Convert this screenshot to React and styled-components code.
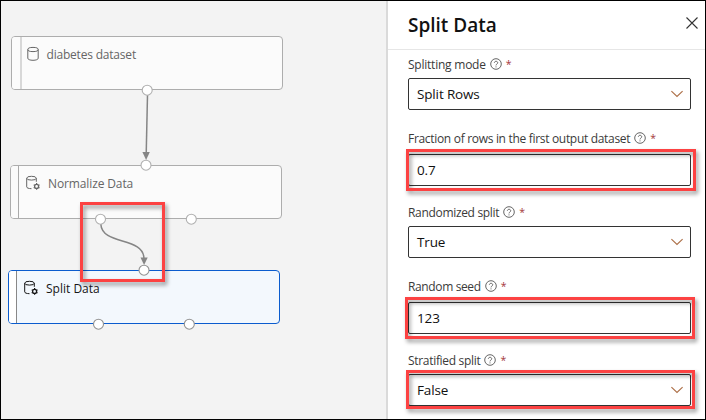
import React from "react";
import styled, { createGlobalStyle } from "styled-components";

const GlobalStyle = createGlobalStyle`
  * { box-sizing: border-box; }
  body { margin: 0; }
`;

const Frame = styled.div`
  width: 706px;
  height: 420px;
  display: flex;
  position: relative;
  overflow: hidden;
  border: 1px solid #000;
  background: #f3f3f3;
  font-family: "Open Sans", "Noto Sans", sans-serif;
  color: #111;
`;

const Canvas = styled.main`
  position: relative;
  flex: 1;
`;

const Node = styled.div`
  position: absolute;
  left: ${(p) => p.$x}px;
  top: ${(p) => p.$y}px;
  width: 272px;
  height: 54px;
  display: flex;
  overflow: hidden;
  border: 1px solid ${(p) => (p.$selected ? "#0b5cce" : "#adadad")};
  border-radius: 4px;
  background: ${(p) => (p.$selected ? "#f3f8fd" : "#fbfbfb")};
  color: ${(p) => (p.$selected ? "#161616" : "#666")};
`;

const Grip = styled.div`
  width: ${(p) => p.$width}px;
  border-right: ${(p) => p.$line};
  background: ${(p) => (p.$selected ? "#fff" : "#fbfbfb")};
`;

const NodeBody = styled.div`
  display: flex;
  align-items: flex-start;
  gap: ${(p) => p.$gap}px;
  padding: 9px 0 0 ${(p) => p.$inset}px;
`;

const NodeName = styled.span`
  font-size: 12px;
  line-height: 18px;
  white-space: nowrap;
  letter-spacing: ${(p) => p.$track}px;
`;

const Wires = styled.svg`
  position: absolute;
  left: -1px;
  top: -1px;
`;

const Panel = styled.aside`
  width: 319px;
  display: flex;
  flex-direction: column;
  border-left: 2px solid #dadada;
  background: #fff;
`;

const PanelHeader = styled.header`
  height: 49px;
  flex: none;
  display: flex;
  align-items: center;
  justify-content: space-between;
  padding: 0 7px 4px 20px;
  border-bottom: 1px solid #e6e6e6;
`;

const Title = styled.h1`
  margin: 0;
  padding-top: 4px;
  font-size: 19px;
  font-weight: 600;
  line-height: 26px;
  white-space: nowrap;
`;

const Form = styled.div`
  display: flex;
  flex-direction: column;
  padding: 0 14px 0 20px;
`;

const Field = styled.div`
  height: ${(p) => p.$height}px;
  display: flex;
  flex-direction: column;
  justify-content: flex-end;
  gap: ${(p) => p.$gap}px;
`;

const Label = styled.div`
  height: 16px;
  display: flex;
  align-items: center;
  font-size: 12px;
  line-height: 18px;
  white-space: nowrap;
  color: #3a3a3a;
`;

const LabelText = styled.span`
  letter-spacing: ${(p) => p.$track}px;
  margin-right: 4px;
  padding-top: 1px;
`;

const Required = styled.span`
  margin-left: 4px;
  font-size: 10.5px;
  color: #a4373a;
`;

const Control = styled.div`
  height: 32px;
  display: flex;
  align-items: center;
  justify-content: space-between;
  padding: 0 7px 0 8px;
  border: 1px solid #333;
  border-radius: 2px;
  background: #fff;
  font-size: 13.5px;
  line-height: 18px;
  letter-spacing: -0.15px;
`;

const Highlight = styled.div`
  position: absolute;
  left: ${(p) => p.$x - 1}px;
  top: ${(p) => p.$y - 1}px;
  width: ${(p) => p.$w}px;
  height: ${(p) => p.$h}px;
  border: 3px solid #fc4242;
  filter: drop-shadow(2px 3px 2px rgba(0, 0, 0, 0.42));
  pointer-events: none;
`;

const DatasetIcon = () => (
  <svg width="13" height="16" viewBox="0 0 13 16" fill="none" stroke="currentColor">
    <ellipse cx="6" cy="3.5" rx="5.2" ry="2.1" />
    <path d="M.8 3.5v8.8c0 1.1 2.2 2 5.2 2s5.2-.9 5.2-2V3.5" />
  </svg>
);

const ModuleIcon = () => (
  <svg width="15" height="16" viewBox="0 0 15 16" fill="none" stroke="currentColor">
    <ellipse cx="5.5" cy="3.2" rx="4.8" ry="1.9" />
    <path d="M.7 3.2v8.7c0 1 1.8 1.7 4.8 1.8M10.3 3.2v3.6" />
    <circle cx="10.6" cy="11.4" r="2" strokeWidth="1.3" />
    <path
      d="M10.6 8.1v1.1M10.6 13.6v1.1M7.7 9.7l.9.6M12.6 12.5l.9.6M7.7 13.1l.9-.6M12.6 10.3l.9-.6"
      strokeWidth="1.2"
    />
  </svg>
);

const HelpIcon = () => (
  <svg width="12" height="12" viewBox="0 0 12 12" fill="none" stroke="#555" strokeWidth=".9">
    <circle cx="6" cy="6" r="5.3" />
    <path d="M4.4 4.8c0-2 3.3-2 3.3 0C7.7 6 6 6.1 6 7.4" />
    <path d="M6 8.4v1" />
  </svg>
);

const ChevronIcon = () => (
  <svg width="12" height="8" viewBox="0 0 12 8" fill="none" stroke="#ad7048" strokeWidth="1.15">
    <path d="M.4 1.1 6 6.5l5.6-5.4" />
  </svg>
);

const CloseIcon = () => (
  <svg width="12" height="12" viewBox="0 0 12 12" fill="none" stroke="#333" strokeWidth="1.1">
    <path d="m.5.5 11 11m0-11-11 11" />
  </svg>
);

const nodes = [
  { name: "diabetes dataset", x: 10, y: 35, grip: 10, line: "2px solid #d8d8d8", inset: 5, gap: 6.5, track: -0.2, icon: DatasetIcon },
  { name: "Normalize Data", x: 9, y: 164, grip: 8, line: "1px solid #aaa", inset: 7, gap: 7, track: -0.12, icon: ModuleIcon },
  { name: "Split Data", x: 7, y: 269, grip: 8, line: "1px solid #888", inset: 7, gap: 7, track: 0, icon: ModuleIcon, selected: true },
];

const ports = [
  [147.2, 90], [146, 165], [100.5, 219], [191.3, 219],
  [144, 270, true], [98.5, 324, true], [189.3, 324, true],
];

const fields = [
  { label: "Splitting mode", value: "Split Rows", select: true, height: 60, gap: 6, track: -0.23 },
  { label: "Fraction of rows in the first output dataset", value: "0.7", height: 76, gap: 8, track: -0.31 },
  { label: "Randomized split", value: "True", select: true, height: 72, gap: 6, track: -0.32 },
  { label: "Random seed", value: "123", height: 76, gap: 8, track: -0.37 },
  { label: "Stratified split", value: "False", select: true, height: 72, gap: 6, track: -0.31 },
];

const highlights = [
  [80, 202, 85, 80],
  [406, 149, 290, 42],
  [405, 297, 290, 42],
  [406, 370, 289, 39],
];

export default function App() {
  return (
    <Frame>
      <GlobalStyle />
      <Canvas>
        {nodes.map(({ icon: Icon, ...n }) => (
          <Node key={n.name} $x={n.x} $y={n.y} $selected={n.selected}>
            <Grip $width={n.grip} $line={n.line} $selected={n.selected} />
            <NodeBody $inset={n.inset} $gap={n.gap}>
              <Icon />
              <NodeName $track={n.track}>{n.name}</NodeName>
            </NodeBody>
          </Node>
        ))}
        <Wires width="386" height="420" fill="none" stroke="#858585" strokeWidth="1.5">
          <path d="M147.5 95 146.2 154" />
          <path d="M142.4 152h7.4l-3.7 8z" fill="#858585" stroke="none" />
          <path d="M100.8 224C102 246 144 236 144 259" />
          <path d="M140.5 257.5h7.2l-3.6 7.5z" fill="#858585" stroke="none" />
          {ports.map(([x, y, dark]) => (
            <circle key={`${x}-${y}`} cx={x} cy={y + 0.2} r="5" fill="#fff" stroke={dark ? "#929292" : "#b0b0b0"} strokeWidth="1.1" />
          ))}
        </Wires>
      </Canvas>
      <Panel>
        <PanelHeader>
          <Title>Split Data</Title>
          <CloseIcon />
        </PanelHeader>
        <Form>
          {fields.map((f) => (
            <Field key={f.label} $height={f.height} $gap={f.gap}>
              <Label>
                <LabelText $track={f.track}>{f.label}</LabelText>
                <HelpIcon />
                <Required>*</Required>
              </Label>
              <Control>
                {f.value}
                {f.select && <ChevronIcon />}
              </Control>
            </Field>
          ))}
        </Form>
      </Panel>
      {highlights.map(([x, y, w, h]) => (
        <Highlight key={`${x}-${y}`} $x={x} $y={y} $w={w} $h={h} />
      ))}
    </Frame>
  );
}
